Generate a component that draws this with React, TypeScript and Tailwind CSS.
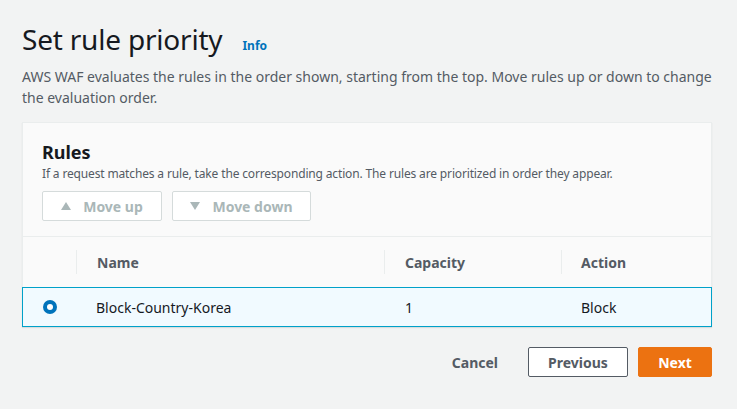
import { useState } from 'react';

const rules = [{ name: 'Block-Country-Korea', capacity: 1, action: 'Block' }];

function Triangle({ down }: { down?: boolean }) {
  return (
    <svg width="10" height="8" viewBox="0 0 10 8" className="fill-current">
      {down ? <path d="M0 0 L10 0 L5 8 Z" /> : <path d="M5 0 L10 8 L0 8 Z" />}
    </svg>
  );
}

export default function App() {
  const [selected, setSelected] = useState(0);

  return (
    <div
      className="min-h-[409px] w-full bg-[#f2f3f3] pl-[22px] pr-[25px] pt-[21px] text-[#16191f]"
      style={{ fontFamily: '"Noto Sans", "Open Sans", Arial, sans-serif' }}
    >
      <div className="flex items-baseline gap-[20px]">
        <h1 className="text-[28px] leading-[36px] font-normal tracking-[-0.2px]">Set rule priority</h1>
        <a className="text-[12px] font-bold text-[#0073bb]">Info</a>
      </div>
      <p className="mt-[9px] text-[14px] leading-[21px] text-[#545b64]">
        AWS WAF evaluates the rules in the order shown, starting from the top. Move rules up or down to change the
        evaluation order.
      </p>

      <div className="mt-[14px] border border-[#eaeded] bg-[#fafafa] shadow-[0_1px_1px_rgba(0,28,36,0.1)]">
        <div className="px-[19px] pt-[18px] pb-[15px]">
          <h2 className="text-[18px] leading-[22px] font-bold">Rules</h2>
          <p className="mt-[3px] text-[12px] leading-[16px] tracking-[-0.15px] text-[#545b64]">
            If a request matches a rule, take the corresponding action. The rules are prioritized in order they appear.
          </p>
          <div className="mt-[9px] flex gap-[10px]">
            <button className="flex h-[30px] w-[120px] items-center justify-center gap-[12px] rounded-[2px] border border-[#d5dbdb] bg-white text-[14px] font-bold text-[#aab7b8]">
              <Triangle />
              Move up
            </button>
            <button className="flex h-[30px] w-[139px] items-center justify-center gap-[12px] rounded-[2px] border border-[#d5dbdb] bg-white text-[14px] font-bold text-[#aab7b8]">
              <Triangle down />
              Move down
            </button>
          </div>
        </div>

        <div className="border-t border-[#eaeded]">
          <div className="flex h-[50px] items-center text-[14px] font-bold text-[#545b64]">
            <div className="h-[24px] w-[54px] border-r border-[#eaeded]" />
            <div className="flex h-[24px] w-[308px] items-center border-r border-[#eaeded] pl-[20px]">Name</div>
            <div className="flex h-[24px] w-[177px] items-center border-r border-[#eaeded] pl-[20px]">Capacity</div>
            <div className="flex h-[24px] flex-1 items-center pl-[19px]">Action</div>
          </div>
          {rules.map((r, i) => (
            <div
              key={r.name}
              onClick={() => setSelected(i)}
              className={
                selected === i
                  ? 'mx-[-1px] mb-[-1px] flex h-[40px] items-center border border-[#00a1c9] bg-[#f1faff] text-[14px]'
                  : 'flex h-[40px] items-center border-t border-[#eaeded] text-[14px]'
              }
            >
              <div className="flex w-[53px] justify-center">
                <span className="flex h-[14px] w-[14px] items-center justify-center rounded-full bg-[#0073bb]">
                  <span className="h-[6px] w-[6px] rounded-full bg-white" />
                </span>
              </div>
              <div className="w-[309px] pl-[20px]">{r.name}</div>
              <div className="w-[177px] pl-[20px]">{r.capacity}</div>
              <div className="flex-1 pl-[19px]">{r.action}</div>
            </div>
          ))}
        </div>
      </div>

      <div className="mt-[20px] flex items-center justify-end gap-[10px]">
        <button className="px-[20px] text-[14px] font-bold text-[#545b64]">Cancel</button>
        <button className="h-[30px] w-[100px] rounded-[2px] border border-[#545b64] bg-white text-[14px] font-bold text-[#545b64]">
          Previous
        </button>
        <button className="h-[30px] w-[74px] rounded-[2px] border border-[#ec7211] bg-[#ec7211] text-[14px] font-bold text-white">
          Next
        </button>
      </div>
    </div>
  );
}
